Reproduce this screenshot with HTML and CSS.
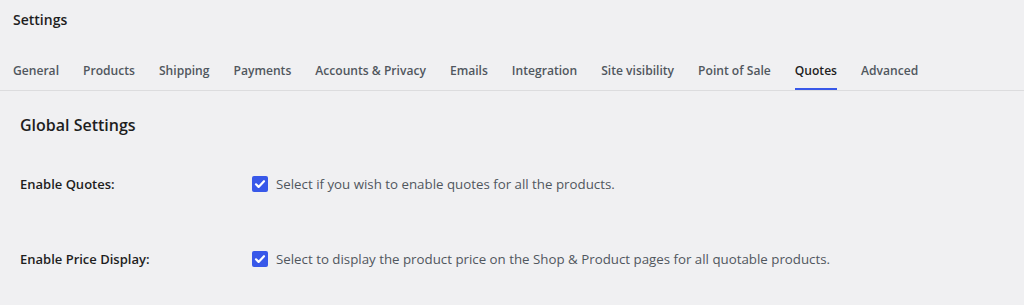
FILE: index.html
```html
<!DOCTYPE html>
<html lang="en">
<head>
    <meta charset="UTF-8">
    <title>Settings</title>
    <link rel="stylesheet" href="styles.css">
</head>
<body>
    <div class="page-title">Settings</div>

    <nav class="tabs">
        <a href="#">General</a>
        <a href="#">Products</a>
        <a href="#">Shipping</a>
        <a href="#">Payments</a>
        <a href="#">Accounts &amp; Privacy</a>
        <a href="#">Emails</a>
        <a href="#">Integration</a>
        <a href="#">Site visibility</a>
        <a href="#">Point of Sale</a>
        <a href="#" class="active">Quotes</a>
        <a href="#">Advanced</a>
    </nav>

    <div class="content">
        <h2>Global Settings</h2>

        <div class="row">
            <div class="label">Enable Quotes:</div>
            <label class="field">
                <span class="check"><svg viewBox="0 0 16 16" width="16" height="16"><path d="M4 8.3l2.6 2.6L12 5.2" fill="none" stroke="#fff" stroke-width="2.2" stroke-linecap="round" stroke-linejoin="round"/></svg></span>
                Select if you wish to enable quotes for all the products.
            </label>
        </div>

        <div class="row">
            <div class="label">Enable Price Display:</div>
            <label class="field">
                <span class="check"><svg viewBox="0 0 16 16" width="16" height="16"><path d="M4 8.3l2.6 2.6L12 5.2" fill="none" stroke="#fff" stroke-width="2.2" stroke-linecap="round" stroke-linejoin="round"/></svg></span>
                Select to display the product price on the Shop &amp; Product pages for all quotable products.
            </label>
        </div>
    </div>
</body>
</html>
```

FILE: styles.css
```css
* {
    margin: 0;
    padding: 0;
    box-sizing: border-box;
}

body {
    background: #f0f0f2;
    color: #1e1e1e;
    font-family: 'Open Sans', 'Noto Sans', sans-serif;
    overflow: hidden;
}

.page-title {
    height: 40px;
    line-height: 40px;
    padding-left: 13px;
    font-size: 14px;
    font-weight: 600;
    color: #1e1e1e;
}

.tabs {
    display: flex;
    gap: 24px;
    margin-top: 10px;
    padding-left: 13px;
    border-bottom: 1px solid #dcdcde;
}

.tabs a {
    display: block;
    padding-top: 11px;
    padding-bottom: 7px;
    line-height: 20px;
    font-size: 12.1px;
    font-weight: 600;
    color: #50575e;
    text-decoration: none;
    border-bottom: 2px solid transparent;
}

.tabs a.active {
    color: #1e1e1e;
    border-bottom-color: #3858e9;
}

.content {
    padding: 0 20px;
}

.content h2 {
    margin-top: 22px;
    line-height: 24px;
    font-size: 16px;
    font-weight: 600;
    color: #1e1e1e;
}

.row {
    display: grid;
    grid-template-columns: 232px 1fr;
    align-items: center;
    min-height: 75px;
}

.row:first-of-type {
    margin-top: 9px;
}

.label {
    font-size: 13px;
    font-weight: 600;
    color: #1e1e1e;
}

.field {
    display: flex;
    align-items: center;
    gap: 8px;
    font-size: 13.3px;
    color: #50575e;
}

.check {
    display: flex;
    width: 16px;
    height: 16px;
    background: #3858e9;
    border-radius: 2px;
}
```
